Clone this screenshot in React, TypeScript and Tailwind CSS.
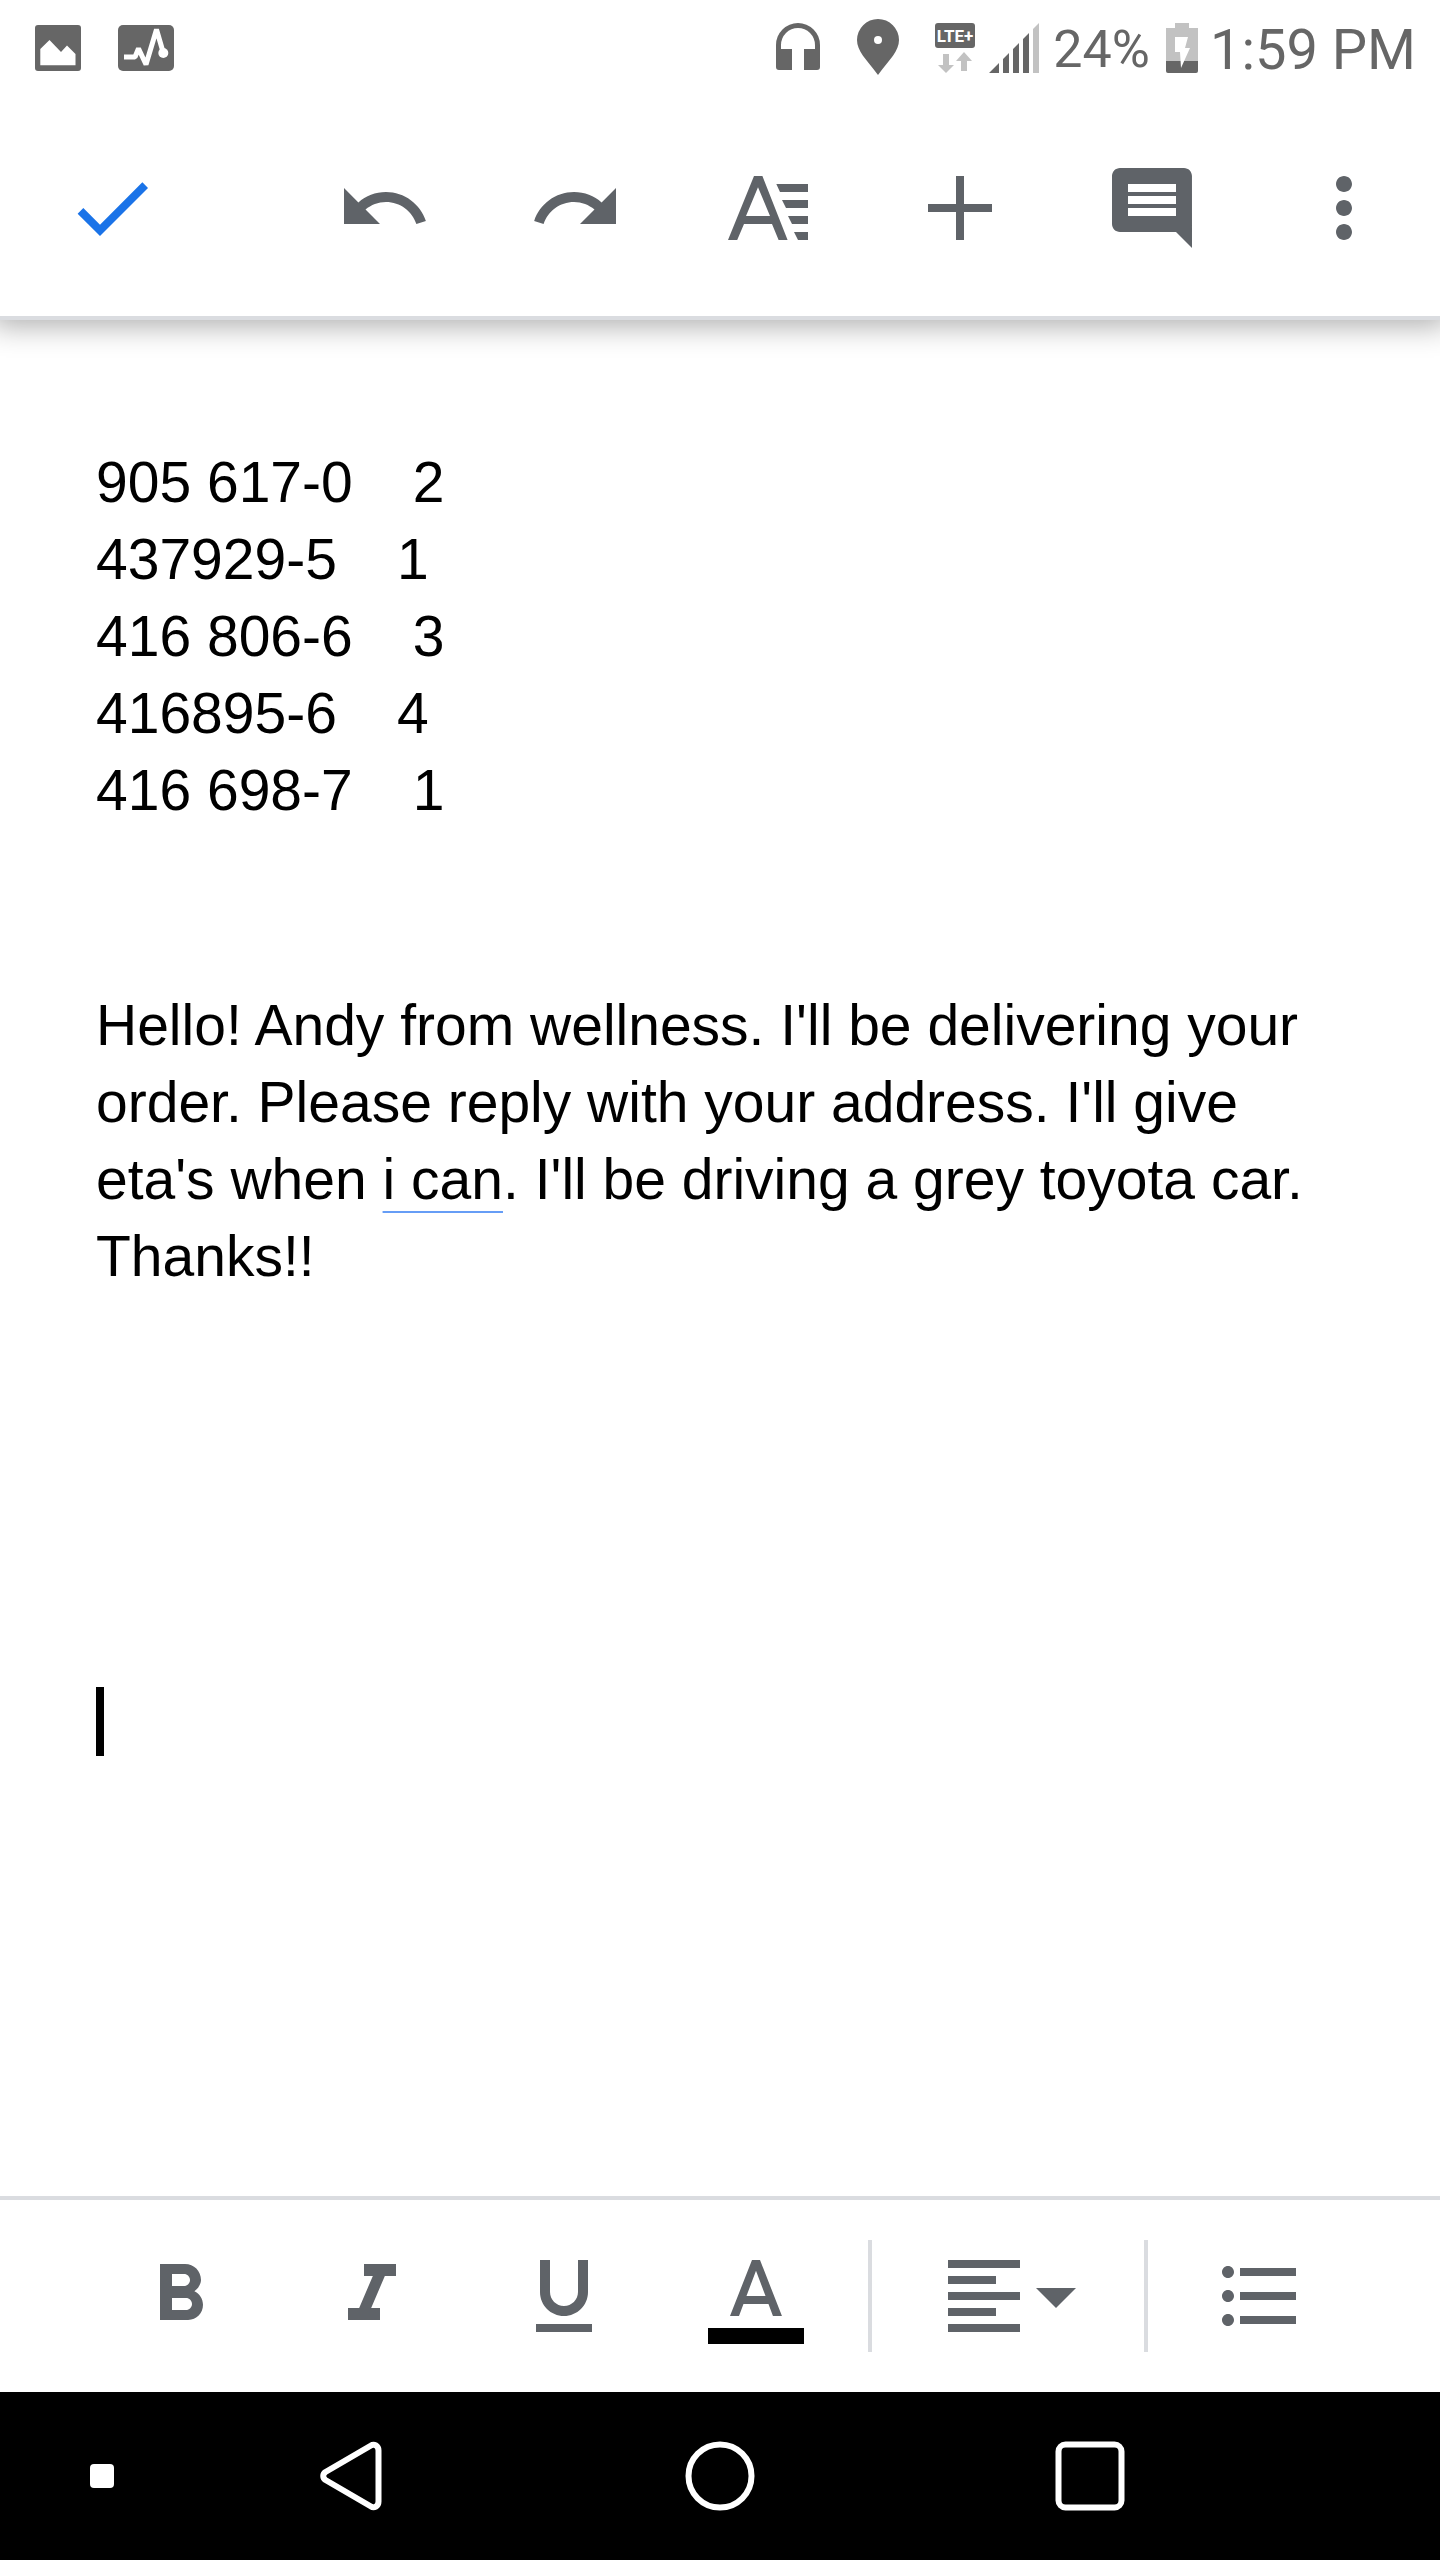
import React from "react";
import {
  MdArrowDropDown,
  MdCheck,
  MdComment,
  MdFormatAlignLeft,
  MdFormatBold,
  MdFormatItalic,
  MdFormatListBulleted,
  MdFormatUnderlined,
  MdMoreVert,
} from "react-icons/md";

const orders = [
  { phone: "905 617-0", qty: "2" },
  { phone: "437929-5", qty: "1" },
  { phone: "416 806-6", qty: "3" },
  { phone: "416895-6", qty: "4" },
  { phone: "416 698-7", qty: "1" },
];

function StatusBar() {
  return (
    <div className="flex h-[100px] items-center pr-6 pb-1 pl-[35px] text-[#666666]">
      <svg className="h-[60px] w-[46px]" viewBox="0 0 46 60" aria-label="Picture saved">
        <rect y="7" width="46" height="46" rx="3" fill="currentColor" />
        <path d="M5.3 31 14.5 22 26 34l6-6.5 8.5 8.5v11.300H5.300z" fill="#fff" />
      </svg>
      <svg className="ml-[37px] h-[60px] w-[56px]" viewBox="0 0 56 60" aria-label="Activity">
        <rect y="7" width="56" height="46" rx="5" fill="currentColor" />
        <path d="M6 39h11l3.500-8.500 7.500 16 10.500-35 7 24" stroke="#fff" strokeWidth="5" strokeLinejoin="bevel" fill="none" />
        <circle cx="45.300" cy="35" r="5" fill="#fff" />
      </svg>
      <div className="ml-auto flex items-center">
        <svg className="h-[60px] w-[44px]" viewBox="0 0 44 60" aria-label="Headphones">
          <path d="M0 27a22 22 0 0 1 44 0v22a3 3 0 0 1-3 3H28V31h11v-4a17 17 0 0 0-34 0v4h11v21H3a3 3 0 0 1-3-3z" fill="currentColor" />
        </svg>
        <svg className="ml-[37px] h-[60px] w-[42px]" viewBox="0 0 42 60" aria-label="Location">
          <path d="M21 1a21 21 0 0 1 21 21c0 11-9 19-21 35C9 41 0 33 0 22A21 21 0 0 1 21 1z" fill="currentColor" />
          <circle cx="21" cy="22" r="4" fill="#fff" />
        </svg>
        <svg className="ml-9 h-[60px] w-[40px]" viewBox="0 0 40 60" aria-label="Mobile data">
          <rect y="5" width="40" height="25" rx="3" fill="currentColor" />
          <text x="20" y="24" textAnchor="middle" fontSize="17" fontWeight="700" fontFamily="Roboto, sans-serif" fill="#fff">
            LTE+
          </text>
          <path d="M8 36h6v11h5l-8 8-8-8h5zM26 53h6V43h5l-8-9-8 9h5z" fill="#c2c2c2" />
        </svg>
        <svg className="ml-3.5 h-[60px] w-[50px]" viewBox="0 0 50 60" aria-label="Signal strength">
          <path d="M0 55 10 45v10zM14 41l6-6v20h-6zM24 31l6-6v30h-6zM34 21l6-6v40h-6z" fill="currentColor" />
          <path d="M44 11l6-6v50h-6z" fill="#c2c2c2" />
        </svg>
        <span className="ml-3.5 pt-1 font-[Roboto,sans-serif] text-[52px] leading-[60px]">24%</span>
        <svg className="ml-4 h-[60px] w-[32px]" viewBox="0 0 32 60" aria-label="Battery charging">
          <path d="M9 5h14v5h9v33H0V10h9z" fill="#c2c2c2" />
          <path d="M0 43h32v10a2 2 0 0 1-2 2H2a2 2 0 0 1-2-2z" fill="currentColor" />
          <path d="M9 19h13l-3 11h5l-9 20-1-16H9z" fill="#fff" />
        </svg>
        <span className="ml-3 pt-1 font-[Roboto,sans-serif] text-[56px] leading-[60px]">1:59 PM</span>
      </div>
    </div>
  );
}

function ToolButton({ label, children }: { label: string; children: React.ReactNode }) {
  return (
    <button type="button" aria-label={label} className="flex flex-1 items-center justify-center">
      {children}
    </button>
  );
}

function Toolbar() {
  return (
    <div className="flex h-[216px] items-center text-[#5f6368]">
      <button type="button" aria-label="Done" className="w-1/5 pl-16 text-[#1a73e8]">
        <MdCheck className="size-24" />
      </button>
      <div className="flex flex-1">
        <ToolButton label="Undo">
          <svg className="size-24" viewBox="0 0 24 24" fill="currentColor">
            <path d="M12.500 8c-2.650 0-5.050.990-6.900 2.600L2 7v9h9l-3.620-3.620c1.390-1.160 3.160-1.880 5.120-1.880 3.540 0 6.550 2.310 7.600 5.500l2.370-.780C21.080 11.030 17.150 8 12.500 8z" />
          </svg>
        </ToolButton>
        <ToolButton label="Redo">
          <svg className="size-24" viewBox="0 0 24 24" fill="currentColor">
            <path d="M18.400 10.600C16.550 8.990 14.150 8 11.500 8c-4.650 0-8.580 3.030-9.960 7.220L3.900 16c1.050-3.190 4.050-5.500 7.600-5.500 1.950 0 3.730.720 5.120 1.880L13 16h9V7l-3.600 3.600z" />
          </svg>
        </ToolButton>
        <ToolButton label="Text format">
          <svg className="size-24" viewBox="0 0 24 24" fill="currentColor">
            <path d="M8.500 4h2.100l6.300 16h-2.250L13 16H6l-1.700 4H2zM9.500 6.800 6.500 14h6z" />
            <path d="M14.080 6H22v2h-7zM15.500 10H22v2h-5.500zM17 14h5v2h-4zM18.500 18H22v2h-2.500z" />
          </svg>
        </ToolButton>
        <ToolButton label="Insert">
          <svg className="size-24" viewBox="0 0 24 24" fill="currentColor">
            <path d="M11 4h2v7h7v2h-7v7h-2v-7H4v-2h7z" />
          </svg>
        </ToolButton>
        <ToolButton label="Comment">
          <MdComment className="size-24" />
        </ToolButton>
        <ToolButton label="More options">
          <MdMoreVert className="size-24" />
        </ToolButton>
      </div>
    </div>
  );
}

function Document() {
  return (
    <main className="flex-1 px-24 pt-[124px] font-['Liberation_Sans',Arial,sans-serif] text-[57px] leading-[77px] text-black">
      <ul>
        {orders.map((o) => (
          <li key={o.phone} className="flex gap-15 whitespace-nowrap">
            <span>{o.phone}</span>
            <span>{o.qty}</span>
          </li>
        ))}
      </ul>
      <p className="mt-[158px]">
        Hello! Andy from wellness. I'll be delivering your order. Please reply with your address. I'll give eta's when{" "}
        <span className="underline decoration-[#669df6] decoration-2 underline-offset-[12px]">i can</span>. I'll be driving a
        grey toyota car. Thanks!!
      </p>
      <div className="mt-[392px] h-[69px] w-2 bg-black" />
    </main>
  );
}

function FormatBar() {
  return (
    <div className="flex h-[196px] items-center border-t-4 border-[#dadce0] px-[84px] text-[#5f6368]">
      <ToolButton label="Bold">
        <MdFormatBold className="size-24" />
      </ToolButton>
      <ToolButton label="Italic">
        <MdFormatItalic className="size-24" />
      </ToolButton>
      <ToolButton label="Underline">
        <MdFormatUnderlined className="size-24" />
      </ToolButton>
      <ToolButton label="Text color">
        <svg className="size-24" viewBox="0 0 24 24" fill="currentColor">
          <path d="M11 3 5.500 17h2.250l1.120-3h6.250l1.120 3h2.250L13 3zm-1.380 9L12 5.670 14.380 12z" />
          <path d="M0 20h24v4H0z" fill="#000" />
        </svg>
      </ToolButton>
      <div className="mx-4 h-28 w-1 bg-[#dadce0]" />
      <button type="button" aria-label="Alignment" className="flex w-60 items-center pl-12">
        <MdFormatAlignLeft className="size-24" />
        <MdArrowDropDown className="-ml-6 size-24" />
      </button>
      <div className="mx-4 h-28 w-1 bg-[#dadce0]" />
      <ToolButton label="Bulleted list">
        <MdFormatListBulleted className="size-24" />
      </ToolButton>
    </div>
  );
}

function NavBar() {
  return (
    <nav className="grid h-[168px] grid-cols-[166fr_369fr_370fr_369fr_166fr] items-center bg-black text-white">
      <button type="button" aria-label="Hide bar" className="ml-[90px] size-6 rounded-sm bg-white" />
      <button type="button" aria-label="Back" className="flex justify-center">
        <svg className="size-[72px]" viewBox="0 0 72 72" fill="none" stroke="currentColor" strokeWidth="6" strokeLinejoin="round">
          <path d="M10.500 32 56 5.500c3-2 7.500 0 7.500 5v51c0 5-4.500 7-7.500 5L10.500 40c-3-2-3-6 0-8z" />
        </svg>
      </button>
      <button type="button" aria-label="Home" className="flex justify-center">
        <svg className="size-[72px]" viewBox="0 0 72 72" fill="none" stroke="currentColor" strokeWidth="6">
          <circle cx="36" cy="36" r="31.500" />
        </svg>
      </button>
      <button type="button" aria-label="Recent apps" className="flex justify-center">
        <svg className="size-[72px]" viewBox="0 0 72 72" fill="none" stroke="currentColor" strokeWidth="6">
          <rect x="4.500" y="4.500" width="63" height="63" rx="7" />
        </svg>
      </button>
    </nav>
  );
}

export default function App() {
  return (
    <div className="flex min-h-screen flex-col bg-white">
      <header className="border-b-4 border-[#dadce0] bg-white shadow-[0_-2px_28px_8px_rgba(0,0,0,0.32)]">
        <StatusBar />
        <Toolbar />
      </header>
      <Document />
      <FormatBar />
      <NavBar />
    </div>
  );
}
